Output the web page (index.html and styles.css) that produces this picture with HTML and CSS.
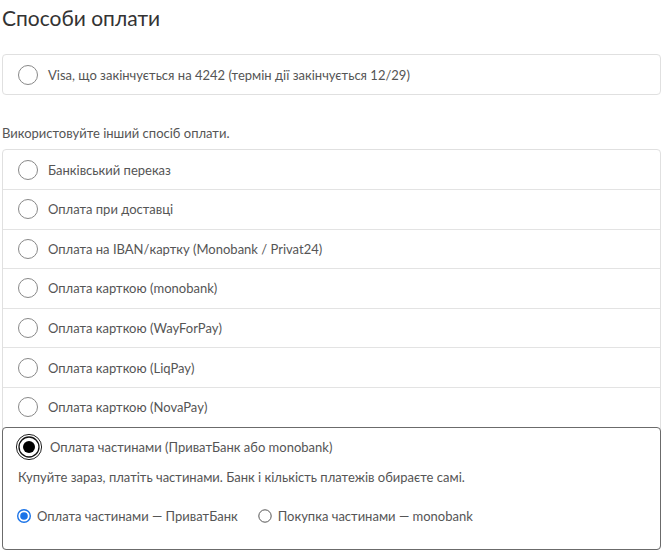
FILE: index.html
```html
<!DOCTYPE html>
<html lang="uk">
<head>
<meta charset="utf-8">
<link rel="stylesheet" href="styles.css">
</head>
<body>
<div class="page">
  <h1 class="title">Способи оплати</h1>
  <div class="box saved">
    <label class="row">
      <span class="radio"></span>
      <span class="label">Visa, що закінчується на 4242 (термін дії закінчується 12/29)</span>
    </label>
  </div>
  <p class="hint">Використовуйте інший спосіб оплати.</p>
  <div class="box list">
    <label class="row"><span class="radio"></span><span class="label">Банківський переказ</span></label>
    <label class="row"><span class="radio"></span><span class="label">Оплата при доставці</span></label>
    <label class="row"><span class="radio"></span><span class="label">Оплата на IBAN/картку (Monobank / Privat24)</span></label>
    <label class="row"><span class="radio"></span><span class="label">Оплата карткою (monobank)</span></label>
    <label class="row"><span class="radio"></span><span class="label">Оплата карткою (WayForPay)</span></label>
    <label class="row"><span class="radio"></span><span class="label">Оплата карткою (LiqPay)</span></label>
    <label class="row"><span class="radio"></span><span class="label">Оплата карткою (NovaPay)</span></label>
    <div class="selected">
      <label class="row sel-row">
        <svg class="radio-sel" width="28" height="28" viewBox="0 0 28 28">
          <circle cx="14" cy="14" r="12.6" fill="none" stroke="#222" stroke-width="1"/>
          <circle cx="14" cy="14" r="10" fill="#fff" stroke="#111" stroke-width="1.3"/>
          <circle cx="14" cy="14" r="6" fill="#000"/>
        </svg>
        <span class="label">Оплата частинами (ПриватБанк або monobank)</span>
      </label>
      <p class="desc">Купуйте зараз, платіть частинами. Банк і кількість платежів обираєте самі.</p>
      <div class="options">
        <label class="opt">
          <svg class="mini" width="14" height="14" viewBox="0 0 14 14">
            <circle cx="7" cy="7" r="6.3" fill="#fff" stroke="#1a73e8" stroke-width="1.4"/>
            <circle cx="7" cy="7" r="3.8" fill="#1a73e8"/>
          </svg>
          <span>Оплата частинами — ПриватБанк</span>
        </label>
        <label class="opt">
          <svg class="mini" width="14" height="14" viewBox="0 0 14 14">
            <circle cx="7" cy="7" r="6.2" fill="#fff" stroke="#555" stroke-width="1"/>
          </svg>
          <span>Покупка частинами — monobank</span>
        </label>
      </div>
    </div>
  </div>
</div>
</body>
</html>
```

FILE: styles.css
```css
html, body {
  margin: 0;
  padding: 0;
  background: #fff;
}
body {
  font-family: "Lato", "Noto Sans", sans-serif;
  color: #555;
  font-size: 13px;
}
.page {
  padding: 0 2px;
}
.title {
  margin: 0;
  padding-top: 4px;
  font-size: 21px;
  font-weight: 400;
  color: #333;
  line-height: 28px;
}
.box {
  border: 1px solid #e0e0e0;
  border-radius: 4px;
}
.saved {
  margin-top: 22px;
}
.hint {
  margin: 29px 0 7px;
  line-height: 18px;
  color: #555;
}
.row {
  display: flex;
  align-items: center;
  height: 38.6px;
  padding-left: 15px;
  gap: 10px;
  border-top: 1px solid #e3e3e3;
}
.box .row:first-child {
  border-top: none;
  height: 39px;
}
.saved .row {
  height: 38px;
}
.radio {
  width: 18px;
  height: 18px;
  border: 1px solid #888;
  border-radius: 50%;
  box-sizing: content-box;
  flex: none;
}
.label {
  line-height: 18px;
}
.selected {
  border: 1px solid #6b6b6b;
  border-radius: 4px;
  margin: 0 -1px -1px;
  padding-bottom: 24px;
}
.selected .row {
  border-top: none;
  height: 38px;
  padding-left: 12px;
  gap: 7px;
}
.radio-sel {
  flex: none;
}
.desc {
  margin: 1px 0 0 15px;
  line-height: 18px;
}
.options {
  display: flex;
  gap: 20px;
  margin: 21px 0 0 14px;
}
.opt {
  display: flex;
  align-items: center;
  gap: 6px;
  line-height: 18px;
}
.mini {
  flex: none;
}
```
